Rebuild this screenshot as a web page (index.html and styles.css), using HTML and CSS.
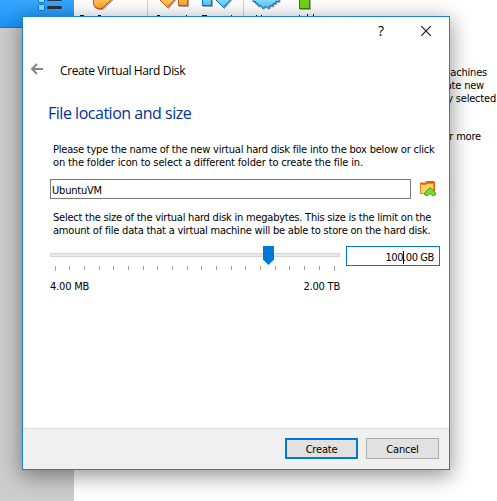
FILE: index.html
```html
<!DOCTYPE html>
<html lang="en">
<head>
<meta charset="utf-8">
<title>Create Virtual Hard Disk</title>
<link rel="stylesheet" href="styles.css">
</head>
<body>
<div class="manager">
  <aside class="sidebar">
    <div class="tools">
      <svg width="73" height="28" viewBox="0 0 73 28">
        <g fill="#8edcff" stroke="#0877c9"><rect x="38.500" y="-3.500" width="6" height="6" rx="1"/><rect x="38.500" y="4.500" width="6" height="6" rx="1"/></g>
        <path d="M48.500 -.5H60.500M48.500 7.500H60.500" stroke="#2d3338" stroke-width="3" stroke-linecap="round"/>
      </svg>
    </div>
  </aside>
  <main class="content">
    <div class="toolbar">
      <svg width="423" height="16" viewBox="74 0 423 16">
        <defs>
          <linearGradient id="or" x2="0" y2="1"><stop stop-color="#ffd070"/><stop offset="1" stop-color="#ff9d22"/></linearGradient>
          <linearGradient id="bl" x2="0" y2="1"><stop stop-color="#8ce0ff"/><stop offset="1" stop-color="#4fc4fa"/></linearGradient>
        </defs>
        <path d="M147.500 0V16M243.500 0V16" stroke="#d4d4d4"/>
        <g class="art">
          <path d="M93.500 -2V4Q94 8 98 8.500H102L113 -2Z" fill="url(#or)" stroke="#c9560c"/>
          <path d="M159 -1L167.500 7.500L175 -1Z" fill="url(#or)" stroke="#d65a0b"/>
          <rect x="178.500" y="-4.500" width="9" height="10" fill="url(#or)" stroke="#d65a0b"/>
          <rect x="202.500" y="-4.500" width="9" height="10" fill="url(#bl)" stroke="#0b6fd0"/>
          <path d="M215 -1L223.500 7.500L231 -1Z" fill="url(#bl)" stroke="#0b6fd0"/>
          <path d="M253 -1V1.500H256L255.500 3.500L258 3.500L258 6L261 5.500L262.500 8.500L265.500 6.500L268.500 8.500L270 5.500L273 6L273 3.500L276 3.500L275.500 1.500H279V-1Z" fill="url(#bl)" stroke="#0b6fd0"/>
          <rect x="299.500" y="-4.500" width="10" height="13" fill="#72d313" stroke="#37810a"/>
        </g>
        <path fill="#111" d="M80 15h4v1h-4zM98 15h3v1h-3zM157 15h3v1h-3zM186 15h1v1h-1zM202 15h5v1h-5zM231 15h1v1h-1zM256 15h1v1h-1zM261 15h1v1h-1zM299 15h1v1h-1zM307 14h1v2h-1zM313 14h1v2h-1z"/>
      </svg>
    </div>
    <div class="welcome">
      <p>machines</p><p class="w2">create new</p><p class="w3">currently selected</p><p class="w4">for more</p>
    </div>
  </main>
</div>
<section class="dialog">
  <header class="titlebar">
    <svg width="426" height="66" viewBox="0 0 426 66" fill="none">
      <path d="M398.200 9.200L407.800 18.800M407.800 9.200L398.200 18.800" stroke="#111" stroke-width="1.100"/>
      <path d="M20 52H8.500M14 47L9 52L14 57" stroke="#858585" stroke-width="1.900"/>
    </svg>
    <span class="help">?</span>
    <h1>Create Virtual Hard Disk</h1>
  </header>
  <div class="body">
    <h2>File location and size</h2>
    <div class="para"><p class="a1">Please type the name of the new virtual hard disk file into the box below or click</p><p class="a2">on the folder icon to select a different folder to create the file in.</p></div>
    <div class="file-row">
      <div class="field">UbuntuVM</div>
      <svg width="18" height="18" viewBox="0 0 18 18">
        <path d="M1 3.500H6.500L7.500 2H15L16 3V14H1Z" fill="#e85d12"/>
        <path d="M1.500 5.500H7L8 4.500H14.500V14.500H1.500Z" fill="#ffd36e" stroke="#e9821f"/>
        <path d="M11 8.500L16.500 14V15.500L15 16.500H13.500L11 14.500L8.500 16.500H7L5.500 15.500V14Z" fill="#79dc25" stroke="#3f9a18" stroke-linejoin="round"/>
      </svg>
    </div>
    <div class="para second"><p class="b1">Select the size of the virtual hard disk in megabytes. This size is the limit on the</p><p class="b2">amount of file data that a virtual machine will be able to store on the hard disk.</p></div>
    <div class="size-row">
      <div class="slider">
        <svg width="290" height="27" viewBox="0 0 290 27">
          <rect x=".5" y="7.500" width="289" height="3" fill="#e7eaea" stroke="#d3d6d5"/>
          <path d="M5.500 20v5M284.500 20v5" stroke="#a5a296"/>
          <path d="M19.500 20v4M34.500 20v4M49.500 20v4M63.500 20v4M78.500 20v4M93.500 20v4M107.500 20v4M122.500 20v4M137.500 20v4M151.500 20v4M166.500 20v4M181.500 20v4M195.500 20v4M210.500 20v4M225.500 20v4M239.500 20v4M254.500 20v4M269.500 20v4" stroke="#a5a296"/>
          <path d="M213 0H224V13.500L218.500 19L213 13.500Z" fill="#0078d7"/>
        </svg>
        <div class="range"><span>4.00 MB</span><span>2.00 TB</span></div>
      </div>
      <div class="size-field">100<i></i>.00 GB</div>
    </div>
  </div>
  <footer class="actions"><button class="primary">Create</button><button>Cancel</button></footer>
</section>
</body>
</html>
```
FILE: styles.css
```css
* { box-sizing: border-box; }
body { margin: 0; width: 497px; height: 501px; overflow: hidden; position: relative; background: #fff; color: #000; font: 11px/13px "DejaVu Sans Condensed", sans-serif; letter-spacing: -.2px; white-space: nowrap; }
p, h1, h2 { margin: 0; font-weight: normal; }
svg { display: block; }
.manager { display: flex; height: 501px; }
.sidebar { width: 74px; background: #cdcdcd; }
.tools { height: 28px; background: linear-gradient(#38a6ff, #1c94f8); border-bottom: 1px solid #1778c9; }
.content { width: 423px; }
.toolbar { height: 16px; }
.art { filter: drop-shadow(1px 1px 0 #aaa); }
.welcome { padding-top: 50px; }
.welcome p { width: 413px; text-align: right; }
.welcome .w2 { width: 410px; }
.welcome .w3 { width: 422px; }
.welcome .w4 { width: 407px; margin-top: 25px; }
.dialog { position: absolute; left: 22px; top: 16px; width: 428px; height: 454px; display: flex; flex-direction: column; background: #fff; border: 1px solid #1883d7; box-shadow: 0 5px 20px 1px rgba(0,0,0,.42); }
.titlebar { height: 84px; position: relative; }
.help { position: absolute; left: 355px; top: 5px; font: 14px/18px "Open Sans", sans-serif; }
h1 { position: absolute; left: 37px; top: 46px; font: 12px/16px "Open Sans", sans-serif; letter-spacing: -.38px; }
.body { flex: 1; padding-left: 27px; }
h2 { margin-left: -2px; height: 42px; font: 16px/24px "Open Sans", sans-serif; letter-spacing: -.48px; color: #003399; }
.para { margin-left: 3px; }
.a1 { letter-spacing: -.21px; }
.a2 { letter-spacing: -.14px; }
.b1 { letter-spacing: -.23px; }
.b2 { letter-spacing: -.21px; }
.file-row { display: flex; gap: 8px; margin-top: 10px; }
.field { width: 361px; height: 20px; border: 1px solid #7a7a7a; padding: 4px 0 0 1px; }
.second { margin-top: 12px; }
.size-row { display: flex; gap: 6px; margin-top: 9px; }
.slider { width: 290px; }
.range { display: flex; justify-content: space-between; margin-top: 7px; }
.size-field { width: 94px; height: 20px; border: 1px solid #0078d7; text-align: right; padding: 4px 5px 0 0; letter-spacing: -.4px; }
.size-field i { display: inline-block; width: 1px; height: 13px; margin-right: -1px; background: #000; vertical-align: top; }
.actions { height: 41px; background: #f0f0f0; border-top: 1px solid #dfdfdf; display: flex; justify-content: flex-end; gap: 8px; padding: 9px 10px 0 0; }
button { width: 73px; height: 21px; padding: 1px 0 0; border: 1px solid #adadad; background: #e1e1e1; font: inherit; letter-spacing: -.2px; color: #000; }
.primary { border: 2px solid #0078d7; }
```
